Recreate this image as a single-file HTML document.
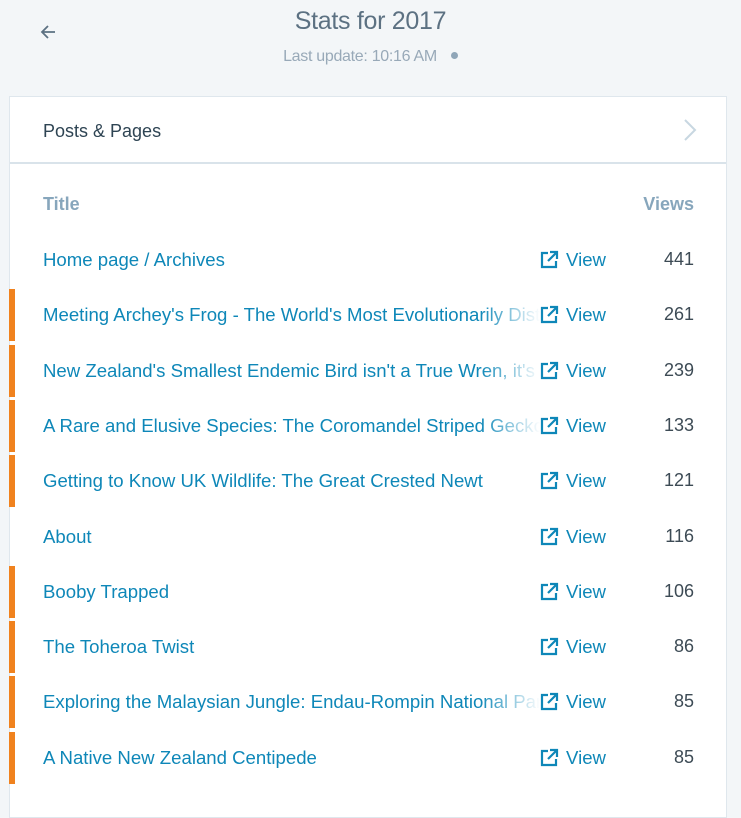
<!DOCTYPE html>
<html><head><style>
body{margin:0;background:#f3f6f8;font-family:"Liberation Sans",sans-serif;width:741px;height:793px;overflow:hidden;position:relative}
.h1{position:absolute;top:7px;left:0;width:741px;text-align:center;font-size:25px;color:#5c7182;font-weight:300;letter-spacing:-0.3px}
.h2{position:absolute;top:48px;left:0;width:741px;text-align:center;font-size:16px;color:#98a9b8;letter-spacing:-0.3px}
.dot{display:inline-block;width:7px;height:7px;border-radius:50%;background:#8fa6b8;margin-left:14px;vertical-align:2px}
.card{position:absolute;left:9px;top:96px;width:716px;height:720px;background:#fff;border:1px solid #dfe7ed}
.hd{height:65px;border-bottom:2px solid #d9e3ea;position:relative}
.hd span{position:absolute;left:33px;top:24px;font-size:18px;color:#2e4453}
.th{position:absolute;top:97px;font-size:18px;font-weight:bold;color:#87a6bc}
.row{position:absolute;left:0;width:716px;height:52px}
.row.o:before{content:"";position:absolute;left:-1px;top:0;width:6px;height:52px;background:#f0821e}
.t{position:absolute;left:33px;top:15px;width:497px;white-space:nowrap;overflow:hidden;font-size:18.6px;color:#0e87b8;-webkit-mask-image:linear-gradient(90deg,#000 88%,transparent);mask-image:linear-gradient(90deg,#000 88%,transparent)}
.v{position:absolute;left:529px;top:15px;font-size:18.6px;color:#0e87b8}
.v svg{vertical-align:-4px;margin-right:7px}
.n{position:absolute;right:32px;top:15px;font-size:18px;color:#3d4b55}
</style></head><body>
<svg style="position:absolute;left:39px;top:23px" width="18" height="18" viewBox="0 0 18 18"><path d="M16 9H3M9 3L3 9l6 6" fill="none" stroke="#5c7182" stroke-width="1.8"/></svg>
<div class="h1">Stats for 2017</div>
<div class="h2">Last update: 10:16 AM<span class="dot"></span></div>
<div class="card">
<div class="hd"><span>Posts &amp; Pages</span>
<svg style="position:absolute;left:673px;top:22px" width="14" height="22" viewBox="0 0 14 22"><path d="M2 1l10 10L2 21" fill="none" stroke="#c8d7e1" stroke-width="2"/></svg></div>
<div class="th" style="left:33px">Title</div>
<div class="th" style="right:32px">Views</div>
<div id="rows"></div>
</div>
<script>
var d=[["Home page / Archives",441,0],["Meeting Archey's Frog - The World's Most Evolutionarily Distinct Amphibian",261,1],["New Zealand's Smallest Endemic Bird isn't a True Wren, it's a Rifleman",239,1],["A Rare and Elusive Species: The Coromandel Striped Gecko",133,1],["Getting to Know UK Wildlife: The Great Crested Newt",121,1],["About",116,0],["Booby Trapped",106,1],["The Toheroa Twist",86,1],["Exploring the Malaysian Jungle: Endau-Rompin National Park",85,1],["A Native New Zealand Centipede",85,1]];
var ic='<svg width="20" height="20" viewBox="0 0 20 20"><path d="M9 3H3v14h14v-6" fill="none" stroke="#0e87b8" stroke-width="2.2"/><path d="M11 2h7v7M18 2L9 11" fill="none" stroke="#0e87b8" stroke-width="2.2"/></svg>';
var h='';d.forEach(function(r,i){h+='<div class="row'+(r[2]?' o':'')+'" style="top:'+(137+i*55.3)+'px"><div class="t">'+r[0]+'</div><div class="v">'+ic+'View</div><div class="n">'+r[1]+'</div></div>';});
document.getElementById('rows').innerHTML=h;
</script>
</body></html>
